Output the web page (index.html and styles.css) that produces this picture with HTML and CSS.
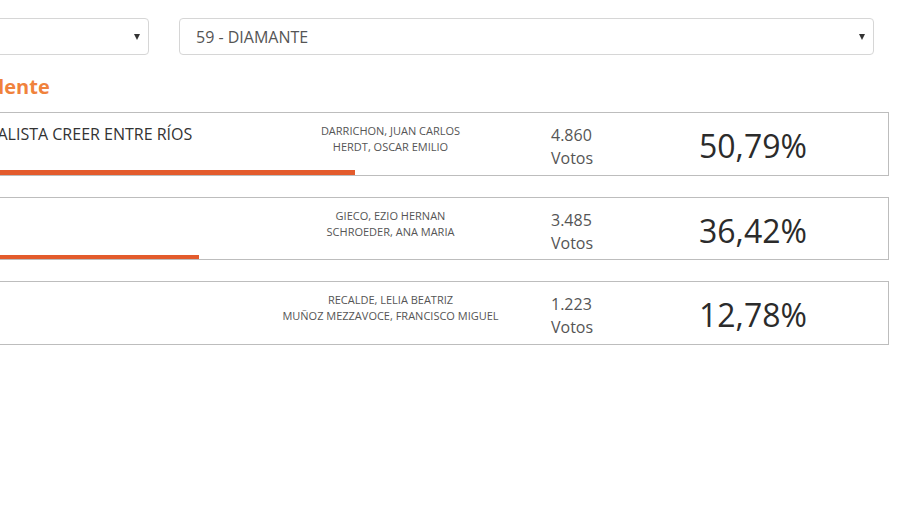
FILE: index.html
```html
<!DOCTYPE html>
<html lang="es">
<head>
<meta charset="utf-8">
<title>Resultados Diamante</title>
<link rel="stylesheet" href="styles.css">
</head>
<body>
<div class="page">
  <div class="filters">
    <div class="select select-dep"><span class="select-text">DIAMANTE</span><span class="caret"></span></div>
    <div class="select select-loc"><span class="select-text">59 - DIAMANTE</span><span class="caret"></span></div>
  </div>
  <h2 class="title">Elección de Intendente</h2>
  <div class="results">
    <div class="card">
      <div class="card-row">
        <div class="party">FRENTE JUSTICIALISTA CREER ENTRE RÍOS</div>
        <div class="cands"><div>DARRICHON, JUAN CARLOS</div><div>HERDT, OSCAR EMILIO</div></div>
        <div class="votes"><div>4.860</div><div>Votos</div></div>
        <div class="pct">50,79%</div>
      </div>
      <div class="bar" style="width:50.79%"></div>
    </div>
    <div class="card">
      <div class="card-row">
        <div class="party">JUNTOS</div>
        <div class="cands"><div>GIECO, EZIO HERNAN</div><div>SCHROEDER, ANA MARIA</div></div>
        <div class="votes"><div>3.485</div><div>Votos</div></div>
        <div class="pct">36,42%</div>
      </div>
      <div class="bar" style="width:36.42%"></div>
    </div>
    <div class="card">
      <div class="card-row">
        <div class="party">LIBERTAD</div>
        <div class="cands"><div>RECALDE, LELIA BEATRIZ</div><div>MUÑOZ MEZZAVOCE, FRANCISCO MIGUEL</div></div>
        <div class="votes"><div>1.223</div><div>Votos</div></div>
        <div class="pct">12,78%</div>
      </div>
      <div class="bar" style="width:12.78%"></div>
    </div>
  </div>
</div>
</body>
</html>
```

FILE: styles.css
```css
html, body {
  margin: 0;
  padding: 0;
  background: #ffffff;
  overflow: hidden;
}
body {
  font-family: "Open Sans", "Noto Sans", sans-serif;
  color: #333333;
}
.page {
  margin-left: -196px;
  width: 1085px;
  padding-top: 18px;
}
.filters {
  display: flex;
  gap: 30px;
  padding: 0 15px;
}
.select {
  box-sizing: border-box;
  height: 37px;
  border: 1px solid #d6d6d6;
  border-radius: 4px;
  display: flex;
  align-items: center;
  justify-content: space-between;
  padding: 0 8px 0 16px;
  font-size: 16px;
  color: #555555;
}
.select-dep { width: 330px; }
.select-loc { width: 695px; }
.caret {
  width: 0;
  height: 0;
  border-left: 3.5px solid transparent;
  border-right: 3.5px solid transparent;
  border-top: 6px solid #333333;
}
.title {
  margin: 18px 0 11px 0;
  font-size: 20px;
  line-height: 28px;
  font-weight: 700;
  color: #f0823c;
  padding-left: 18px;
}
.results {
  display: flex;
  flex-direction: column;
  gap: 21px;
}
.card {
  box-sizing: border-box;
  height: 63.5px;
  border: 1px solid #bdbdbd;
  display: flex;
  flex-direction: column;
}
.card-row {
  flex: 1;
  display: grid;
  grid-template-columns: 475px 221px 148px 1fr;
  align-items: center;
}
.party {
  font-size: 16px;
  padding-left: 79px;
  align-self: start;
  padding-top: 10px;
  color: #333333;
  white-space: nowrap;
}
.cands {
  text-align: center;
  font-size: 11px;
  line-height: 16px;
  color: #555555;
  align-self: start;
  padding-top: 10px;
}
.votes {
  padding-left: 50px;
  font-size: 16px;
  line-height: 23px;
  color: #555555;
  align-self: start;
  padding-top: 11px;
}
.pct {
  padding-left: 50px;
  padding-top: 8px;
  font-size: 32px;
  color: #2b2b2b;
}
.bar {
  height: 5px;
  background: #e35b2c;
}
```
